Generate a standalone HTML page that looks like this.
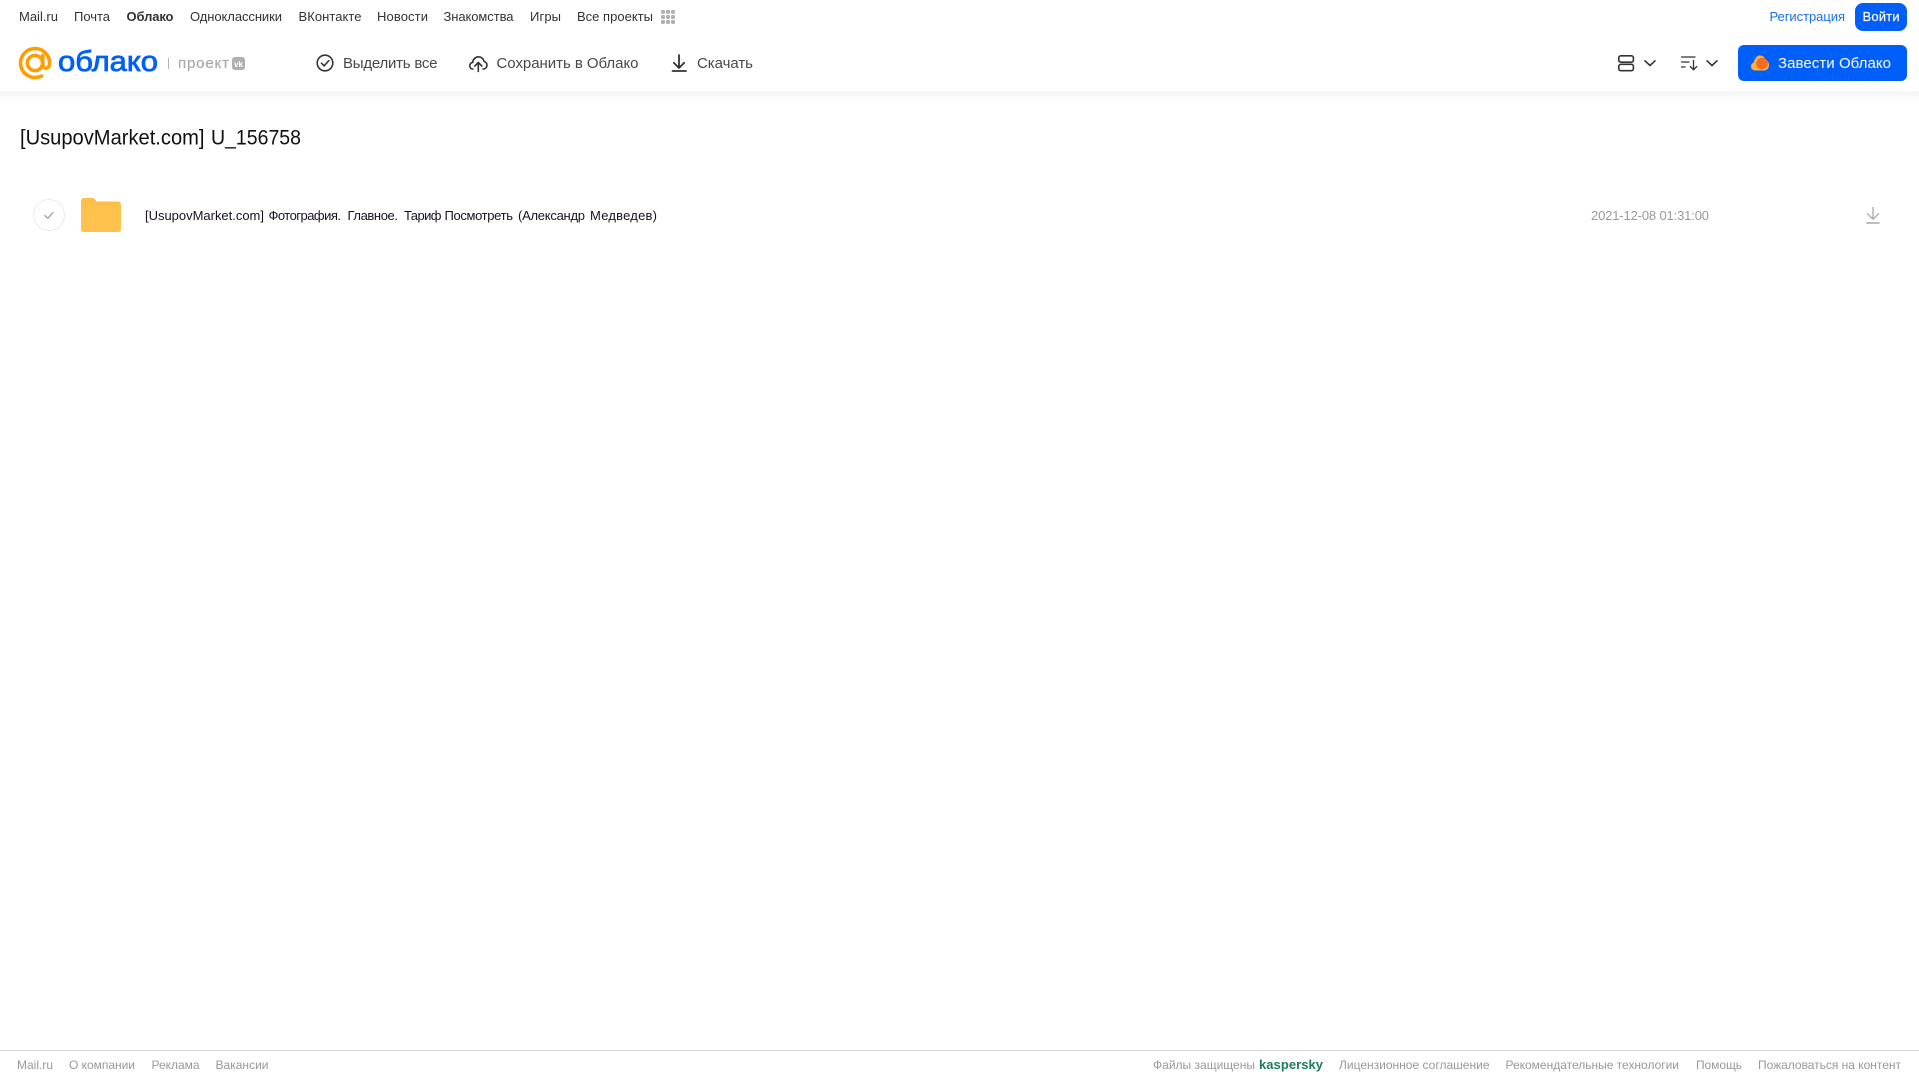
<!DOCTYPE html>
<html lang="ru">
<head>
<meta charset="utf-8">
<title>Облако</title>
<style>
html,body{margin:0;padding:0;background:#fff;width:1919px;height:1079px;overflow:hidden}
#shadow{position:absolute;left:0;top:91px;width:1919px;height:12px;background:linear-gradient(#f5f5f5,#fff)}
svg{position:absolute;left:0;top:0;display:block}
text{font-family:"Liberation Sans","Noto Sans CJK JP",sans-serif;white-space:pre}
.n{font-size:13px;fill:#333}
.t{font-size:15px;fill:#484848}
.f{font-size:12px;fill:#999}
.r{font-size:13px;fill:#1a1024}
</style>
</head>
<body>
<div id="shadow"></div>
<svg width="1919" height="1079" viewBox="0 0 1919 1079" xmlns="http://www.w3.org/2000/svg">
  <!-- top nav -->
  <text class="n" x="19" y="21" textLength="39">Mail.ru</text>
  <text class="n" x="74" y="21" textLength="36">Почта</text>
  <text class="n" x="126.5" y="21" textLength="47" font-weight="700" style="fill:#333">Облако</text>
  <text class="n" x="190" y="21" textLength="92">Одноклассники</text>
  <text class="n" x="298.5" y="21" textLength="63">ВКонтакте</text>
  <text class="n" x="377" y="21" textLength="51">Новости</text>
  <text class="n" x="443.5" y="21" textLength="70">Знакомства</text>
  <text class="n" x="530" y="21" textLength="31">Игры</text>
  <text class="n" x="577" y="21" textLength="76">Все проекты</text>
  <g fill="#b0b0b0">
    <rect x="661" y="10" width="4" height="4" rx="1.2"/><rect x="666" y="10" width="4" height="4" rx="1.2"/><rect x="671" y="10" width="4" height="4" rx="1.2"/>
    <rect x="661" y="15" width="4" height="4" rx="1.2"/><rect x="666" y="15" width="4" height="4" rx="1.2"/><rect x="671" y="15" width="4" height="4" rx="1.2"/>
    <rect x="661" y="20" width="4" height="4" rx="1.2"/><rect x="666" y="20" width="4" height="4" rx="1.2"/><rect x="671" y="20" width="4" height="4" rx="1.2"/>
  </g>
  <text x="1769.5" y="21" font-size="13" textLength="75.5" style="fill:#1a6fe8">Регистрация</text>
  <rect x="1855" y="3" width="52" height="28" rx="8" fill="#005ff9"/>
  <text x="1862.5" y="21" font-size="13" textLength="37" style="fill:#fff" stroke="#fff" stroke-width=".2">Войти</text>

  <!-- logo -->
  <g fill="none" stroke="#ff9e00" stroke-linecap="round">
    <circle cx="35" cy="63" r="7.6" stroke-width="3.6"/>
    <path d="M42.8 55.8V64.5C42.8 69.6 49.2 69.6 49.5 64A14.5 14.5 0 1 0 41.5 76" stroke-width="3.6"/>
  </g>
  <text x="58" y="71" font-size="29" textLength="100" lengthAdjust="spacingAndGlyphs" stroke="#005ff9" stroke-width=".8" style="fill:#005ff9">облако</text>
  <rect x="168" y="58" width="1" height="11" fill="#b5b5b5"/>
  <text x="178" y="68" font-size="15" textLength="51" stroke="#aaa" stroke-width=".2" style="fill:#aaa">проект</text>
  <rect x="232" y="57" width="13" height="13" rx="3" fill="#b0b0b0"/>
  <text x="234" y="67" font-size="8" font-weight="700" textLength="9" style="fill:#fff">vk</text>

  <!-- toolbar -->
  <g fill="none" stroke="#333" stroke-width="1.6" stroke-linecap="round" stroke-linejoin="round">
    <circle cx="325" cy="63" r="7.8"/>
    <path d="M321.5 63.2L324.2 65.9L328.8 60.6"/>
    <path d="M473 69H472.5C470.5 69 469.8 67 469.8 65.8C469.8 64 471 62.6 472.8 62.3C473 59.2 475.5 56.8 478.5 56.8C481.3 56.8 483.6 58.8 484.1 61.5C485.9 62 487 63.5 487 65.2C487 67.3 485.4 69 483.4 69H483"/>
    <path d="M478.3 71.5V62.5M474.8 66L478.3 62.5L481.8 66"/>
    <path d="M679 55V68M673.8 62.8L679 68L684.2 62.8" stroke-width="1.8"/>
    <path d="M672.5 71H686" stroke-width="1.8"/>
  </g>
  <text class="t" x="343" y="68" textLength="94.5">Выделить все</text>
  <text class="t" x="496.5" y="68" textLength="142">Сохранить в Облако</text>
  <text class="t" x="697" y="68" textLength="56">Скачать</text>

  <!-- right toolbar -->
  <g fill="none" stroke="#333" stroke-width="1.6" stroke-linecap="round" stroke-linejoin="round">
    <rect x="1618.8" y="55.8" width="14.6" height="6.4" rx="2"/>
    <rect x="1618.8" y="64.3" width="14.6" height="6.4" rx="2"/>
    <path d="M1645 60.8L1650 65.5L1655 60.8"/>
    <path d="M1681.5 57H1695M1681.5 62H1689M1681.5 67H1685" stroke-width="1.3"/>
    <path d="M1693.5 60.5V69.5M1690.3 66.5L1693.5 69.8L1696.7 66.5" stroke-width="1.3"/>
    <path d="M1707 60.8L1712 65.5L1717 60.8"/>
  </g>
  <rect x="1738" y="45" width="169" height="36" rx="6" fill="#005ff9"/>
  <path d="M1755 70.5C1752.5 70.5 1751 68.6 1751 66.4C1751 64.4 1752.2 63 1753.8 62.5C1754.2 59.5 1756.6 55.5 1760 55.5C1763 55.5 1765 57.6 1765.6 60C1767.8 60.6 1769 62.8 1769 65.2C1769 68.2 1766.8 70.5 1764 70.5Z" fill="#ffb13d"/>
  <circle cx="1762" cy="63.5" r="5.8" fill="#f56b1f"/>
  <text x="1778" y="68" font-size="15" textLength="113" style="fill:#fff">Завести Облако</text>

  <!-- title -->
  <text x="20" y="144.5" font-size="21" textLength="184.5" lengthAdjust="spacingAndGlyphs" style="fill:#111">[UsupovMarket.com]</text>
  <text x="211" y="144.5" font-size="21" textLength="90" lengthAdjust="spacingAndGlyphs" style="fill:#111">U_156758</text>

  <!-- row -->
  <circle cx="49" cy="215" r="15.5" fill="#fff" stroke="#ececec"/>
  <path d="M45 215.5L47.8 218.3L53 212.5" fill="none" stroke="#999" stroke-width="1.2" stroke-linecap="round" stroke-linejoin="round"/>
  <path d="M81 201C81 199.3 82.3 198 84 198H92.5C94 198 95 199 95.8 200.5L96.5 201.5H118C119.7 201.5 121 202.8 121 204.5V229C121 230.7 119.7 232 118 232H84C82.3 232 81 230.7 81 229Z" fill="#ffbe47"/>
  <rect x="81" y="206" width="40" height="26" rx="2.5" fill="#ffc24d"/>
  <text class="r" x="145" y="220" textLength="119">[UsupovMarket.com]</text>
  <text class="r" x="268.5" y="220" textLength="72.5">Фотография.</text>
  <text class="r" x="347.5" y="220" textLength="50.5">Главное.</text>
  <text class="r" x="404" y="220" textLength="37.5">Тариф</text>
  <text class="r" x="444.5" y="220" textLength="68.5">Посмотреть</text>
  <text class="r" x="518" y="220" textLength="67">(Александр</text>
  <text class="r" x="590" y="220" textLength="67">Медведев)</text>
  <text x="1591" y="220" font-size="13" textLength="118" style="fill:#999">2021-12-08 01:31:00</text>
  <g fill="none" stroke="#a8a8a8" stroke-width="1.3" stroke-linecap="round" stroke-linejoin="round">
    <path d="M1873 207.5V219M1867.5 213.8L1873 219.2L1878.5 213.8"/>
    <path d="M1867 223H1879" stroke-width="1.6"/>
  </g>

  <!-- footer -->
  <rect x="0" y="1050" width="1919" height="1" fill="#d9d9d9"/>
  <text class="f" x="17" y="1069" textLength="36">Mail.ru</text>
  <text class="f" x="69" y="1069" textLength="66">О компании</text>
  <text class="f" x="151.5" y="1069" textLength="48">Реклама</text>
  <text class="f" x="215.5" y="1069" textLength="53">Вакансии</text>
  <text class="f" x="1153" y="1069" textLength="102">Файлы защищены</text>
  <text x="1259" y="1069" font-size="13" font-weight="700" textLength="64" style="fill:#1d7a63">kaspersky</text>
  <text class="f" x="1339" y="1069" textLength="150.5">Лицензионное соглашение</text>
  <text class="f" x="1505.5" y="1069" textLength="173.5">Рекомендательные технологии</text>
  <text class="f" x="1696" y="1069" textLength="46">Помощь</text>
  <text class="f" x="1758" y="1069" textLength="143">Пожаловаться на контент</text>
</svg>
</body>
</html>
